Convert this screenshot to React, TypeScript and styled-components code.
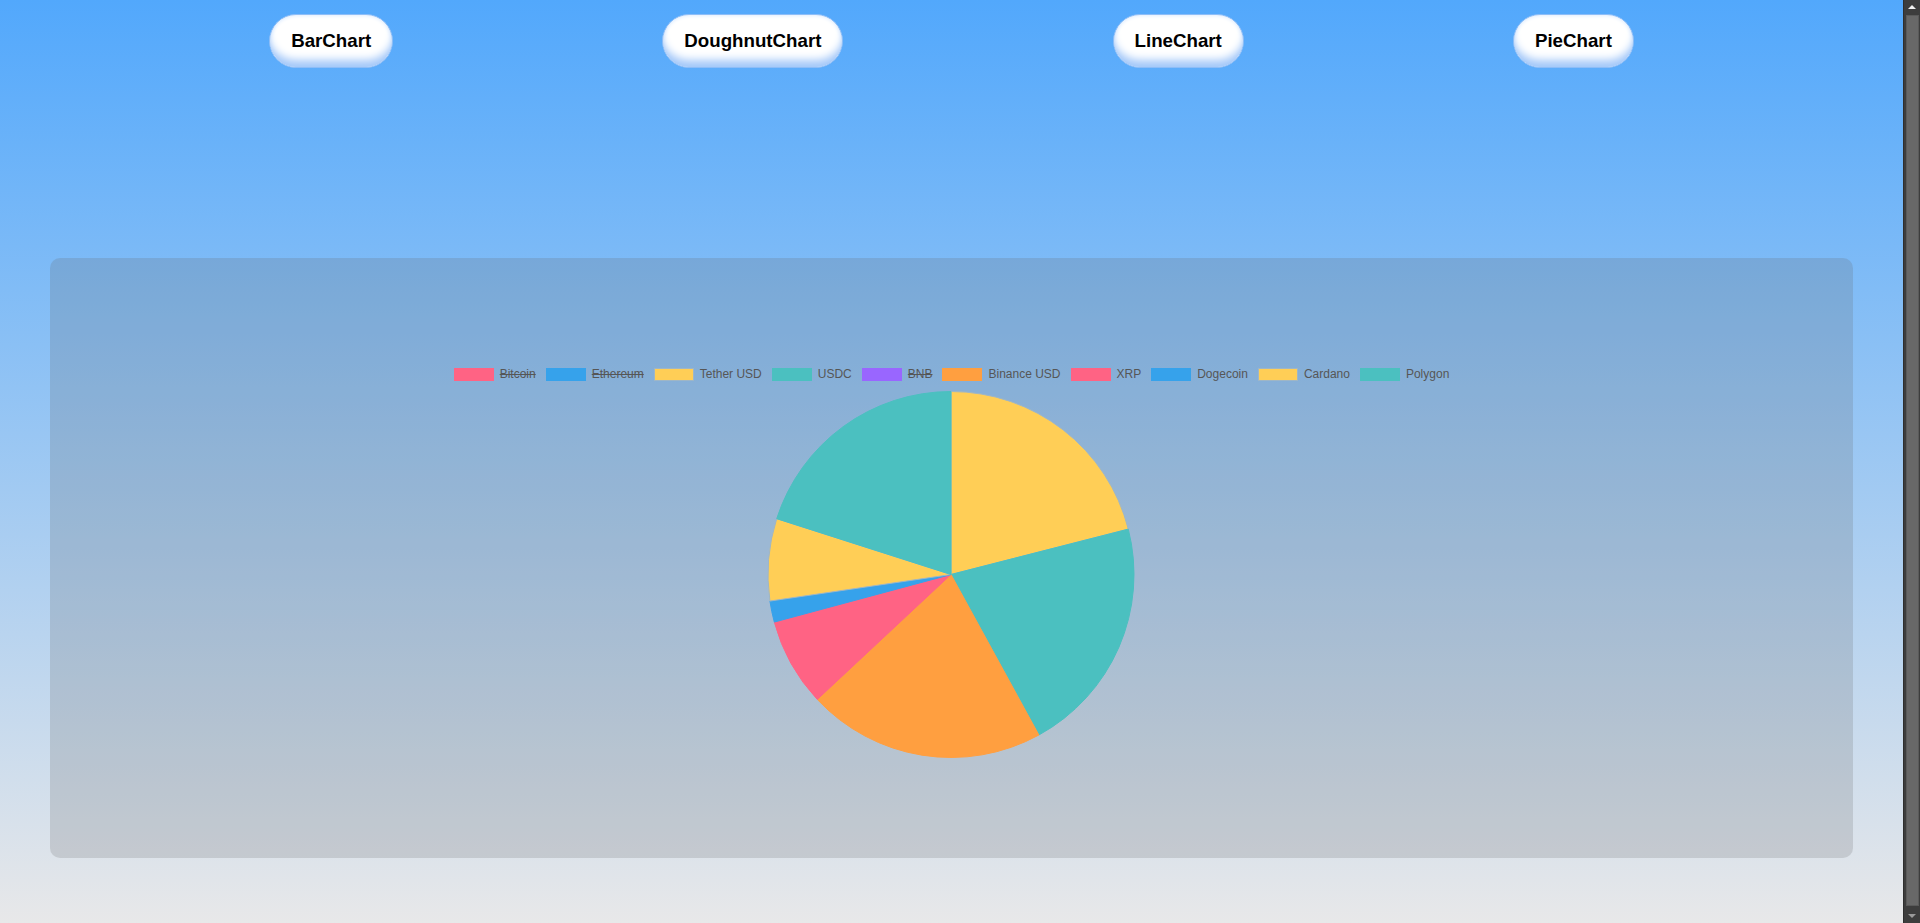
import { memo } from 'react';
import styled, { createGlobalStyle } from 'styled-components';

const GlobalStyle = createGlobalStyle`
  body {
    margin: 0;
    font-family: 'Liberation Sans', Arial, sans-serif;
    overflow: hidden;
  }
`;

type Coin = { label: string; value: number; color: string; border: string; hidden?: boolean };

const coins: Coin[] = [
  { label: 'Bitcoin', value: 27000, color: '#ff6384', border: '#ff6384', hidden: true },
  { label: 'Ethereum', value: 1800, color: '#36a2eb', border: '#36a2eb', hidden: true },
  { label: 'Tether USD', value: 1, color: '#ffce56', border: '#9fb6c6' },
  { label: 'USDC', value: 1, color: '#4bc0c0', border: '#4bc0c0' },
  { label: 'BNB', value: 240, color: '#9966ff', border: '#9966ff', hidden: true },
  { label: 'Binance USD', value: 1, color: '#ff9f40', border: '#ff9f40' },
  { label: 'XRP', value: 0.37, color: '#ff6384', border: '#ff6384' },
  { label: 'Dogecoin', value: 0.089, color: '#36a2eb', border: '#36a2eb' },
  { label: 'Cardano', value: 0.345, color: '#ffce56', border: '#9fb6c6' },
  { label: 'Polygon', value: 0.955, color: '#4bc0c0', border: '#4bc0c0' },
];

const charts = ['BarChart', 'DoughnutChart', 'LineChart', 'PieChart'];

const SApp = styled.div`
  display: flex;
  height: 100vh;
`;

const SPage = styled.main`
  flex: 1;
  min-width: 0;
  padding-top: 14px;
  background: linear-gradient(to bottom, #52a8fc 0%, #e8e8e9 100%);
`;

const SNav = styled.nav`
  display: flex;
  justify-content: space-evenly;
  align-items: center;
`;

const SNavButton = styled.button`
  height: 54px;
  padding: 0 21px;
  border: 1px solid #8dbdf7;
  border-radius: 27px;
  background: #fff;
  box-shadow: inset 0 -10px 9px -3px #a4c8f9, inset 0 0 4px #cfe3fd;
  color: #000;
  font-family: 'Liberation Sans', Arial, sans-serif;
  font-size: 18.72px;
  font-weight: bold;
  cursor: pointer;
`;

const SPanel = styled.section`
  margin: 190px 50px 0;
  height: 600px;
  display: flex;
  align-items: center;
  justify-content: center;
  border-radius: 10px;
  background: rgba(100, 100, 100, 0.2);
`;

const SChart = styled.div`
  height: 400px;
  display: flex;
  flex-direction: column;
  align-items: center;
`;

const SLegend = styled.ul`
  display: flex;
  gap: 10px;
  margin: 0;
  padding: 9px 0 10px;
  list-style: none;
`;

const SLegendItem = styled.li<{ $hidden?: boolean }>`
  display: flex;
  align-items: center;
  gap: 6px;
  height: 14px;
  font-size: 12px;
  color: #565656;
  text-decoration: ${({ $hidden }) => ($hidden ? 'line-through' : 'none')};
`;

const SBox = styled.span<{ $fill: string; $border: string }>`
  box-sizing: border-box;
  width: 40px;
  height: 13px;
  background: ${({ $fill }) => $fill};
  border: 1px solid ${({ $border }) => $border};
`;

const SPie = styled.svg`
  display: block;
`;

const SScrollbar = styled.div`
  width: 17px;
  display: flex;
  flex-direction: column;
  align-items: center;
  background: #3d3d3d;
  border-left: 1px solid #2e2e2e;
  box-sizing: border-box;
`;

const SArrow = styled.div<{ $down?: boolean }>`
  height: 14px;
  display: flex;
  align-items: center;
  justify-content: center;

  &::before {
    content: '';
    border-left: 4px solid transparent;
    border-right: 4px solid transparent;
    ${({ $down }) => ($down ? 'border-top: 4px solid #9a9a9a;' : 'border-bottom: 4px solid #f0f0f0;')}
  }
`;

const SThumb = styled.div`
  flex: 1;
  width: 13px;
  margin: 1px 0 3px;
  background: #686868;
  border: 1px solid #5a5a5a;
  box-sizing: border-box;
`;

const SIZE = 368;
const R = 183.5;
const C = SIZE / 2;

const point = (angle: number) => {
  const rad = (angle * Math.PI) / 180;
  return `${(C + R * Math.cos(rad)).toFixed(2)} ${(C + R * Math.sin(rad)).toFixed(2)}`;
};

const Pie = () => {
  const visible = coins.filter((c) => !c.hidden);
  const total = visible.reduce((sum, c) => sum + c.value, 0);
  let start = -90;

  return (
    <SPie width={SIZE} height={SIZE} viewBox={`0 0 ${SIZE} ${SIZE}`}>
      {visible.map((c) => {
        const sweep = (c.value / total) * 360;
        const end = start + sweep;
        const d = `M ${C} ${C} L ${point(start)} A ${R} ${R} 0 ${sweep > 180 ? 1 : 0} 1 ${point(end)} Z`;
        start = end;
        return <path key={c.label} d={d} fill={c.color} stroke={c.border} strokeWidth={1} strokeLinejoin='round' />;
      })}
    </SPie>
  );
};

const App = () => (
  <>
    <GlobalStyle />
    <SApp>
      <SPage>
        <SNav>
          {charts.map((name) => (
            <SNavButton key={name}>{name}</SNavButton>
          ))}
        </SNav>

        <SPanel>
          <SChart>
            <SLegend>
              {coins.map((c) => (
                <SLegendItem key={c.label} $hidden={c.hidden}>
                  <SBox $fill={c.color} $border={c.border} />
                  {c.label}
                </SLegendItem>
              ))}
            </SLegend>
            <Pie />
          </SChart>
        </SPanel>
      </SPage>

      <SScrollbar>
        <SArrow />
        <SThumb />
        <SArrow $down />
      </SScrollbar>
    </SApp>
  </>
);

export default memo(App);
